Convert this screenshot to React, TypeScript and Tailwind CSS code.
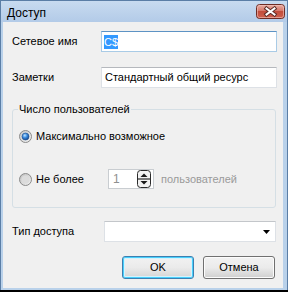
import React from "react";

function CloseBtn() {
  return (
    <svg width="29" height="15" viewBox="0 0 29 15" className="mt-[3px] self-start">
      <defs>
        <linearGradient id="cg" x1="0" y1="0" x2="0" y2="1">
          <stop offset="0" stopColor="#eab0a6" />
          <stop offset="0.45" stopColor="#d6786a" />
          <stop offset="0.5" stopColor="#c24d3c" />
          <stop offset="1" stopColor="#d0624f" />
        </linearGradient>
      </defs>
      <rect x="0.5" y="0.5" width="28" height="14" rx="3" fill="url(#cg)" stroke="#6e2c24" />
      <rect x="1.5" y="1.5" width="26" height="12" rx="2" fill="none" stroke="#f3c7bf" strokeOpacity="0.6" />
      <path d="M10.5 4.5 L18.5 10.5 M18.5 4.5 L10.5 10.5" stroke="#5a2a25" strokeWidth="4" strokeLinecap="square" />
      <path d="M10.5 4.5 L18.5 10.5 M18.5 4.5 L10.5 10.5" stroke="#ffffff" strokeWidth="2" strokeLinecap="square" />
    </svg>
  );
}

function Radio({ checked }: { checked: boolean }) {
  return (
    <svg width="13" height="13" viewBox="0 0 13 13" className="shrink-0">
      <defs>
        <linearGradient id={checked ? "ro1" : "ro2"} x1="0" y1="0" x2="1" y2="1">
          <stop offset="0" stopColor={checked ? "#c5c5c5" : "#bdbdbd"} />
          <stop offset="1" stopColor={checked ? "#f6f6f6" : "#f4f4f4"} />
        </linearGradient>
        <radialGradient id="rdot" cx="0.4" cy="0.35" r="0.7">
          <stop offset="0" stopColor="#c2e4ff" />
          <stop offset="0.45" stopColor="#3d8ee0" />
          <stop offset="1" stopColor="#0f3f86" />
        </radialGradient>
      </defs>
      <circle cx="6.5" cy="6.5" r="6" fill={`url(#${checked ? "ro1" : "ro2"})`} stroke="#8a8a8a" strokeWidth="1" />
      {checked ? (
        <circle cx="6.5" cy="6.5" r="3.5" fill="url(#rdot)" stroke="#1e4c8a" strokeWidth="0.6" />
      ) : (
        <circle cx="6.5" cy="6.5" r="4" fill="#dcdcdc" />
      )}
    </svg>
  );
}

function Spinner() {
  return (
    <svg width="14" height="18" viewBox="0 0 14 18" className="shrink-0">
      <rect x="0.5" y="0.5" width="13" height="17" rx="3" fill="#f2f2f2" stroke="#2b2b2b" strokeWidth="1" />
      <line x1="1" y1="9" x2="13" y2="9" stroke="#2b2b2b" strokeWidth="1.2" />
      <path d="M3.5 7 L7 3.5 L10.5 7 Z" fill="#1a1a1a" />
      <path d="M3.5 11 L7 14.5 L10.5 11 Z" fill="#1a1a1a" />
    </svg>
  );
}

export default function App() {
  return (
    <div className="w-[288px] h-[292px] bg-black font-['Liberation_Sans',Arial,sans-serif] text-[11px] text-black leading-[13px]">
      <div className="h-[290px] flex flex-col border-l border-r border-t border-[#5b7ea6] bg-[#b9d1ea]">
        <div className="h-[21px] flex justify-between pl-[6px] pr-[2px] bg-gradient-to-b from-[#c8dbf0] to-[#b3cbe8]">
          <span className="text-[12px] leading-[14px] mt-[5px]">Доступ</span>
          <CloseBtn />
        </div>
        <div className="ml-[2px] w-[280px] h-[266px] bg-[#f0f0f0] flex flex-col">
          <div className="flex items-center mt-[9px] pl-[9px] h-[21px]">
            <span className="w-[89px]">Сетевое имя</span>
            <div className="w-[176px] h-[21px] border border-[#a9cbe6] border-t-[#5d93c4] bg-white flex items-center pl-[2px]">
              <span className="bg-[#3399ff] text-white leading-[14px]">C$</span>
            </div>
          </div>
          <div className="flex items-center mt-[15px] pl-[9px] h-[21px]">
            <span className="w-[89px]">Заметки</span>
            <div className="w-[176px] h-[21px] border border-[#dde1e6] border-t-[#b5b8bd] bg-white flex items-center pl-[3px]">
              <span>Стандартный общий ресурс</span>
            </div>
          </div>
          <fieldset className="mt-[15px] ml-[9px] w-[264px] border border-[#d5dfe5] rounded-[3px] pt-[13px] pb-[18px]">
            <legend className="ml-[5px] px-[1px] leading-[13px]">Число пользователей</legend>
            <div className="flex items-center h-[14px] pl-[6px] gap-[4px]">
              <Radio checked={true} />
              <span>Максимально возможное</span>
            </div>
            <div className="flex items-center h-[20px] pl-[6px] mt-[26px]">
              <Radio checked={false} />
              <span className="ml-[4px] w-[72px]">Не более</span>
              <div className="w-[46px] h-[20px] border border-[#c9cdd1] bg-white flex items-center justify-between pl-[4px] pr-[2px]">
                <span className="text-[#8e8f8f] text-[12px]">1</span>
                <Spinner />
              </div>
              <span className="ml-[7px] text-[#9a9a9a]">пользователей</span>
            </div>
          </fieldset>
          <div className="flex items-center mt-[13px] pl-[9px] h-[21px]">
            <span className="w-[92px]">Тип доступа</span>
            <div className="w-[172px] h-[21px] border border-[#dde1e6] border-t-[#c3c6ca] bg-white flex items-center justify-end pr-[5px]">
              <svg width="7" height="4" viewBox="0 0 7 4">
                <path d="M0 0 H7 L3.5 4 Z" fill="#000" />
              </svg>
            </div>
          </div>
          <div className="flex justify-end gap-[9px] pr-[8px] mt-[14px]">
            <button className="w-[72px] h-[23px] rounded-[3px] border border-[#3c7fb1] bg-gradient-to-b from-[#f2f2f2] via-[#ebebeb] to-[#d4d4d4] shadow-[inset_0_0_0_1px_#48d0fc,inset_0_0_0_2px_#d5f2fd] text-[11px] leading-[13px]">
              OK
            </button>
            <button className="w-[72px] h-[23px] rounded-[3px] border border-[#707070] bg-gradient-to-b from-[#f2f2f2] via-[#ebebeb] to-[#cfcfcf] shadow-[inset_0_0_0_1px_#fcfcfc] text-[11px] leading-[13px]">
              Отмена
            </button>
          </div>
        </div>
      </div>
    </div>
  );
}
